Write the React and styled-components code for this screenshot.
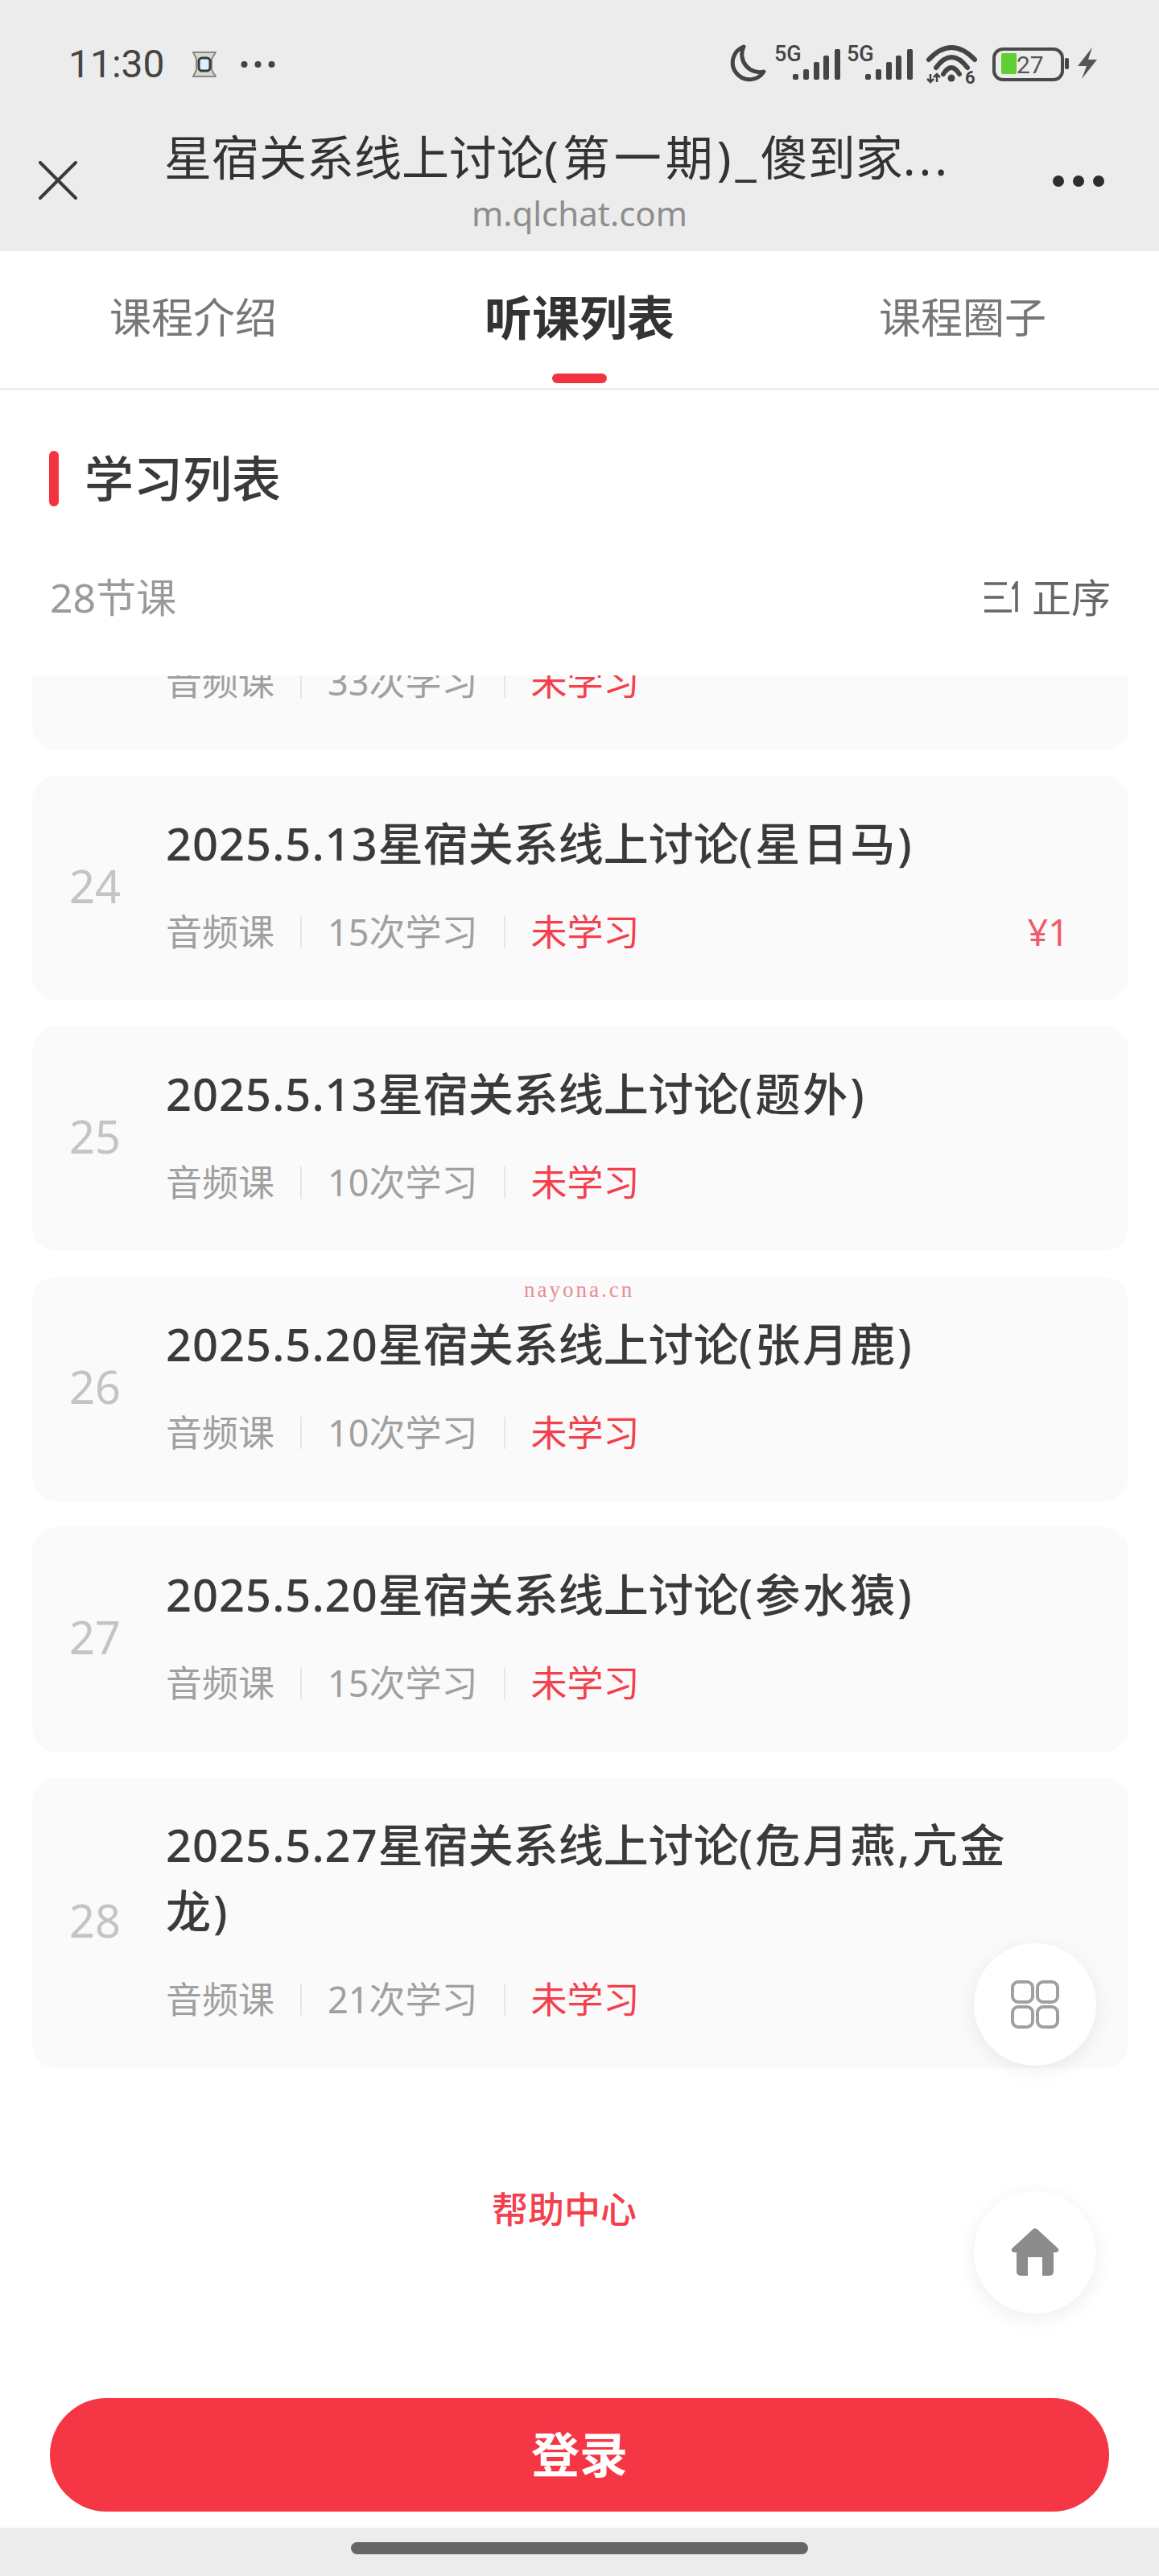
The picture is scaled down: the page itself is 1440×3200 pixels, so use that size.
import React from "react";
import styled, { createGlobalStyle } from "styled-components";

const FONT = `"Noto Sans", "Noto Sans CJK SC", sans-serif`;

const Global = createGlobalStyle`
  html, body { margin: 0; padding: 0; background: #fff; }
  * { box-sizing: border-box; }
  body { font-family: ${FONT}; }
`;

const Page = styled.div`
  position: relative;
  width: 1440px;
  height: 3200px;
  overflow: hidden;
  background: #fff;
  display: flex;
  flex-direction: column;
`;

const Chrome = styled.header`
  height: 312px;
  background: #ececec;
  display: flex;
  flex-direction: column;
`;

const StatusBar = styled.div`
  height: 160px;
  padding: 0 74px 0 85px;
  display: flex;
  align-items: center;
  justify-content: space-between;
`;

const StatusLeft = styled.div`
  display: flex;
  align-items: center;
`;

const Time = styled.span`
  font-family: "Roboto", sans-serif;
  font-size: 48px;
  line-height: 60px;
  color: #444;
  width: 154px;
`;

const Icon = styled.svg`
  display: block;
`;

const DotsIcon = styled(Icon)`
  margin-left: 30px;
`;

const BrowserBar = styled.div`
  display: grid;
  grid-template-columns: 204px 1032px 204px;
  height: 152px;
`;

const CloseButton = styled.div`
  margin: 40px 0 0 48px;
  width: 48px;
  height: 48px;
`;

const MoreButton = styled.div`
  justify-self: end;
  margin: 58px 68px 0 0;
  width: 64px;
  height: 14px;
  display: flex;
  justify-content: space-between;
`;

const MoreDot = styled.i`
  width: 14px;
  height: 14px;
  border-radius: 50%;
  background: #2e2e2e;
`;

const PageInfo = styled.div`
  display: flex;
  flex-direction: column;
`;

const PageTitle = styled.div`
  font-size: 59px;
  line-height: 70px;
  color: #333;
  white-space: nowrap;
`;

const Spaced = styled.span`
  letter-spacing: ${(p) => p.$gap}px;
`;

const PageUrl = styled.div`
  margin-top: 10px;
  font-size: 42px;
  line-height: 50px;
  color: #8e8e8e;
  text-align: center;
`;

const Tabs = styled.nav`
  display: grid;
  grid-template-columns: 480px 480px 472px;
  height: 173px;
  border-bottom: 3px solid #efefef;
`;

const Tab = styled.div`
  position: relative;
  display: flex;
  justify-content: center;
  padding-top: 47px;
  font-size: ${(p) => (p.$active ? 59 : 52)}px;
  line-height: 70px;
  font-weight: ${(p) => (p.$active ? 700 : 400)};
  color: ${(p) => (p.$active ? "#333" : "#777")};
  &::after {
    content: "";
    display: ${(p) => (p.$active ? "block" : "none")};
    position: absolute;
    left: 206px;
    top: 152px;
    width: 68px;
    height: 12px;
    border-radius: 6px;
    background: #f43341;
  }
`;

const SectionHead = styled.h2`
  margin: 75px 0 0 61px;
  display: flex;
  align-items: center;
  gap: 32px;
  height: 69px;
  font-size: 61px;
  line-height: 69px;
  font-weight: 500;
  color: #3a3a3a;
`;

const SectionMark = styled.i`
  width: 12px;
  height: 69px;
  border-radius: 6px;
  background: #f43341;
`;

const CountRow = styled.div`
  margin-top: 83px;
  height: 60px;
  padding: 0 60px 0 62px;
  display: flex;
  align-items: center;
  justify-content: space-between;
`;

const CountLabel = styled.span`
  font-size: 50px;
  line-height: 60px;
  color: #9a9a9a;
`;

const SortButton = styled.div`
  display: flex;
  align-items: center;
  gap: 16px;
  font-size: 49px;
  line-height: 60px;
  color: #666;
`;

const List = styled.section`
  margin: 67px 38px 0 40px;
  display: flex;
  flex-direction: column;
  gap: 32px;
`;

const Card = styled.article`
  display: grid;
  grid-template-columns: 120px 1fr;
  padding: 42px 74px 55px 46px;
  background: #fafafa;
  border-radius: 30px;
`;

const ClippedCard = styled(Card)`
  height: 93px;
  padding-top: 0;
  border-radius: 0 0 30px 30px;
  align-content: end;
  overflow: hidden;
`;

const LessonNo = styled.div`
  align-self: center;
  margin-top: 6px;
  font-size: 56px;
  line-height: 70px;
  color: #c4c4c4;
`;

const LessonBody = styled.div`
  grid-column: 2;
  min-width: 0;
`;

const LessonTitle = styled.div`
  max-width: 1060px;
  font-size: 56px;
  line-height: 82px;
  font-weight: 500;
  color: #3a3a3a;
`;

const Meta = styled.div`
  margin-top: 40px;
  height: 60px;
  display: flex;
  align-items: center;
  font-size: 45px;
  line-height: 60px;
  color: #a0a0a0;
`;

const ClippedMeta = styled(Meta)`
  grid-column: 2;
  margin-top: 0;
`;

const MetaSep = styled.i`
  width: 2px;
  height: 40px;
  margin: 0 32px;
  background: #e6e6e6;
`;

const MetaStatus = styled.span`
  color: #f4404c;
`;

const Price = styled.span`
  margin-left: auto;
  color: #f2596b;
`;

const HelpLink = styled.div`
  margin-top: 146px;
  padding-right: 38px;
  text-align: center;
  font-size: 45px;
  line-height: 60px;
  font-weight: 500;
  color: #f4404c;
`;

const LoginButton = styled.button`
  margin: 204px 62px 0;
  height: 142px;
  padding: 0 0 6px;
  border: 0;
  border-radius: 71px;
  background: #f53644;
  color: #fff;
  font-family: ${FONT};
  font-size: 60px;
  font-weight: 700;
`;

const GestureBar = styled.div`
  margin-top: 20px;
  height: 60px;
  padding-top: 18px;
  background: #ececec;
  display: flex;
  justify-content: center;
`;

const GestureHandle = styled.i`
  width: 568px;
  height: 15px;
  border-radius: 8px;
  background: #666;
`;

const FloatButton = styled.div`
  position: absolute;
  right: 78px;
  top: ${(p) => p.$top}px;
  width: 152px;
  height: 152px;
  border-radius: 50%;
  background: #fff;
  box-shadow: 0 6px 26px rgba(0, 0, 0, 0.07);
  display: flex;
  align-items: center;
  justify-content: center;
`;

const Watermark = styled.div`
  position: absolute;
  left: 651px;
  top: 1586px;
  font-family: "Liberation Serif", serif;
  font-size: 27px;
  letter-spacing: 3px;
  line-height: 32px;
  color: #ea8c92;
`;

const BadgeIcon = () => (
  <Icon width="30" height="32" viewBox="0 0 30 32">
    <path d="M1 1h28l-5 8v14l5 8H1l4-8V9z" fill="#d8d8d0" stroke="#8a8a82" strokeWidth="2" />
    <rect x="8" y="8" width="14" height="16" rx="4" fill="#dff0fa" stroke="#3c3c3c" strokeWidth="3" />
  </Icon>
);

const SmallDots = () => (
  <DotsIcon width="44" height="10" viewBox="0 0 44 10">
    <circle cx="4.5" cy="5" r="4" fill="#444" />
    <circle cx="21.5" cy="5" r="4" fill="#444" />
    <circle cx="38.5" cy="5" r="4" fill="#444" />
  </DotsIcon>
);

const Signal = ({ x }) => {
  const bars = [
    [0, 38],
    [13, 32],
    [26, 23],
    [38, 15],
    [52, 7],
  ];
  return bars.map(([dx, top]) => (
    <rect key={dx} x={x + dx} y={top} width="7" height={45 - top} rx="2" fill="#444" />
  ));
};

const StatusIcons = () => (
  <Icon width="460" height="72" viewBox="0 -10 460 72">
    <path d="M18 4A21 21 0 1 0 43 35A22 22 0 0 1 18 4Z" fill="none" stroke="#444" strokeWidth="5" strokeLinejoin="round" />
    <text x="56" y="22" fontFamily="Roboto, sans-serif" fontSize="27" fontWeight="500" fill="#444">5G</text>
    <Signal x={79} />
    <text x="146" y="22" fontFamily="Roboto, sans-serif" fontSize="27" fontWeight="500" fill="#444">5G</text>
    <Signal x={169} />
    <g fill="none" stroke="#444" strokeWidth="6" strokeLinecap="round">
      <path d="M248 20Q276 -10 305 20" />
      <path d="M257 30Q276 4 296 30" />
      <path d="M266 38Q276 22 286 38" />
    </g>
    <circle cx="276" cy="43" r="4.5" fill="#444" />
    <path d="M250 38v10M246 44l4 4 4-4M258 48v-10M254 42l4-4 4 4" fill="none" stroke="#444" strokeWidth="2.5" />
    <text x="293" y="50" fontFamily="Roboto, sans-serif" fontSize="22" fontWeight="700" fill="#444">6</text>
    <rect x="329" y="7" width="85" height="38" rx="11" fill="none" stroke="#4a4a4a" strokeWidth="4" />
    <rect x="338" y="12" width="19" height="26" rx="2" fill="#5fcf33" />
    <text x="357" y="37" fontFamily="Roboto, sans-serif" fontSize="30" fill="#555">27</text>
    <rect x="417" y="18" width="5" height="14" rx="2" fill="#444" />
    <path d="M451 5L433 28H444L438 44L457 20H446Z" fill="#555" />
  </Icon>
);

const CloseIcon = () => (
  <Icon width="48" height="48" viewBox="0 0 48 48">
    <path d="M2 2L46 46M46 2L2 46" stroke="#3a3a3a" strokeWidth="4" strokeLinecap="round" />
  </Icon>
);

const SortIcon = () => (
  <Icon width="43" height="40" viewBox="0 0 43 40">
    <path d="M0 3H28M0 20H24M0 37H34M40 38V2L35 10" fill="none" stroke="#666" strokeWidth="3.5" />
  </Icon>
);

const GridIcon = () => (
  <Icon width="60" height="60" viewBox="0 0 60 60">
    <g fill="none" stroke="#a0a0a0" strokeWidth="4">
      <rect x="2" y="2" width="25" height="25" rx="7" />
      <rect x="33" y="2" width="25" height="25" rx="7" />
      <rect x="2" y="33" width="25" height="25" rx="7" />
      <rect x="33" y="33" width="25" height="25" rx="7" />
    </g>
  </Icon>
);

const HomeIcon = () => (
  <Icon width="60" height="60" viewBox="0 0 60 60">
    <path
      d="M27 1.5a4 4 0 0 1 6 0L58.5 25a3 3 0 0 1-2 5H53V54a5 5 0 0 1-5 5H39V36H21V59H12a5 5 0 0 1-5-5V30H3.5a3 3 0 0 1-2-5Z"
      fill="#8c8c8c"
    />
  </Icon>
);

const lessons = [
  { no: 24, date: "2025.5.13", topic: "(星日马)", count: "15次学习", price: "¥1" },
  { no: 25, date: "2025.5.13", topic: "(题外)", count: "10次学习" },
  { no: 26, date: "2025.5.20", topic: "(张月鹿)", count: "10次学习" },
  { no: 27, date: "2025.5.20", topic: "(参水猿)", count: "15次学习" },
  { no: 28, date: "2025.5.27", topic: "(危月燕,亢金龙)", count: "21次学习" },
];

export default function App() {
  return (
    <Page>
      <Global />
      <Chrome>
        <StatusBar>
          <StatusLeft>
            <Time>11:30</Time>
            <BadgeIcon />
            <SmallDots />
          </StatusLeft>
          <StatusIcons />
        </StatusBar>
        <BrowserBar>
          <CloseButton>
            <CloseIcon />
          </CloseButton>
          <PageInfo>
            <PageTitle>
              星宿关系线上讨论<Spaced $gap={5}>(第一期)_</Spaced>傻到家<Spaced $gap={4}>...</Spaced>
            </PageTitle>
            <PageUrl>m.qlchat.com</PageUrl>
          </PageInfo>
          <MoreButton>
            <MoreDot />
            <MoreDot />
            <MoreDot />
          </MoreButton>
        </BrowserBar>
      </Chrome>

      <Tabs>
        <Tab>课程介绍</Tab>
        <Tab $active>听课列表</Tab>
        <Tab>课程圈子</Tab>
      </Tabs>

      <SectionHead>
        <SectionMark />
        学习列表
      </SectionHead>

      <CountRow>
        <CountLabel>28节课</CountLabel>
        <SortButton>
          <SortIcon />
          正序
        </SortButton>
      </CountRow>

      <List>
        <ClippedCard>
          <ClippedMeta>
            音频课
            <MetaSep />
            33次学习
            <MetaSep />
            <MetaStatus>未学习</MetaStatus>
          </ClippedMeta>
        </ClippedCard>
        {lessons.map((l) => (
          <Card key={l.no}>
            <LessonNo>{l.no}</LessonNo>
            <LessonBody>
              <LessonTitle>
                <Spaced $gap={1}>{l.date}</Spaced>星宿关系线上讨论<Spaced $gap={3}>{l.topic}</Spaced>
              </LessonTitle>
              <Meta>
                音频课
                <MetaSep />
                {l.count}
                <MetaSep />
                <MetaStatus>未学习</MetaStatus>
                {l.price && <Price>{l.price}</Price>}
              </Meta>
            </LessonBody>
          </Card>
        ))}
      </List>

      <HelpLink>帮助中心</HelpLink>
      <LoginButton>登录</LoginButton>
      <GestureBar>
        <GestureHandle />
      </GestureBar>

      <FloatButton $top={2414}>
        <GridIcon />
      </FloatButton>
      <FloatButton $top={2722}>
        <HomeIcon />
      </FloatButton>
      <Watermark>nayona.cn</Watermark>
    </Page>
  );
}
